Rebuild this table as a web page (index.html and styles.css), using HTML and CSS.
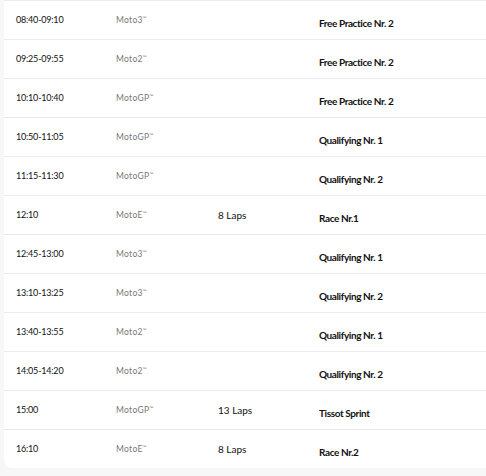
FILE: index.html
```html
<!DOCTYPE html>
<html>
<head>
<meta charset="utf-8">
<link rel="stylesheet" href="styles.css">
</head>
<body>
<div class="card">
  <div class="row"><span class="time">08:40-09:10</span><span class="cls">Moto3<sup>™</sup></span><span class="laps"></span><span class="session">Free Practice Nr. 2</span></div>
  <div class="row"><span class="time">09:25-09:55</span><span class="cls">Moto2<sup>™</sup></span><span class="laps"></span><span class="session">Free Practice Nr. 2</span></div>
  <div class="row"><span class="time">10:10-10:40</span><span class="cls">MotoGP<sup>™</sup></span><span class="laps"></span><span class="session">Free Practice Nr. 2</span></div>
  <div class="row"><span class="time">10:50-11:05</span><span class="cls">MotoGP<sup>™</sup></span><span class="laps"></span><span class="session">Qualifying Nr. 1</span></div>
  <div class="row"><span class="time">11:15-11:30</span><span class="cls">MotoGP<sup>™</sup></span><span class="laps"></span><span class="session">Qualifying Nr. 2</span></div>
  <div class="row"><span class="time">12:10</span><span class="cls">MotoE<sup>™</sup></span><span class="laps">8 Laps</span><span class="session">Race Nr.1</span></div>
  <div class="row"><span class="time">12:45-13:00</span><span class="cls">Moto3<sup>™</sup></span><span class="laps"></span><span class="session">Qualifying Nr. 1</span></div>
  <div class="row"><span class="time">13:10-13:25</span><span class="cls">Moto3<sup>™</sup></span><span class="laps"></span><span class="session">Qualifying Nr. 2</span></div>
  <div class="row"><span class="time">13:40-13:55</span><span class="cls">Moto2<sup>™</sup></span><span class="laps"></span><span class="session">Qualifying Nr. 1</span></div>
  <div class="row"><span class="time">14:05-14:20</span><span class="cls">Moto2<sup>™</sup></span><span class="laps"></span><span class="session">Qualifying Nr. 2</span></div>
  <div class="row"><span class="time">15:00</span><span class="cls">MotoGP<sup>™</sup></span><span class="laps">13 Laps</span><span class="session">Tissot Sprint</span></div>
  <div class="row"><span class="time">16:10</span><span class="cls">MotoE<sup>™</sup></span><span class="laps">8 Laps</span><span class="session">Race Nr.2</span></div>
</div>
</body>
</html>
```
FILE: styles.css
```css
html, body {
  margin: 0;
  padding: 0;
  background: #f7f7f7;
}
body {
  font-family: "Lato", "Noto Sans", sans-serif;
  color: #111;
  overflow: hidden;
}
.card {
  margin-left: 4px;
  margin-right: -20px;
  background: #fff;
  border-radius: 0 0 8px 8px;
}
.row {
  display: grid;
  grid-template-columns: 100px 102px 101px 1fr;
  padding-left: 12px;
  height: 38px;
  border-top: 1px solid #ebebeb;
  align-items: start;
}
.time {
  font-size: 9px;
  letter-spacing: -0.2px;
  padding-top: 13px;
  line-height: 12px;
}
.cls {
  font-size: 8.5px;
  letter-spacing: 0.3px;
  color: #777;
  padding-top: 13px;
  line-height: 12px;
}
.cls sup {
  font-size: 5px;
  letter-spacing: 0;
  vertical-align: top;
  line-height: 8px;
}
.laps {
  font-size: 10px;
  padding-top: 13px;
  line-height: 12px;
}
.session {
  font-size: 10px;
  font-weight: 700;
  letter-spacing: -0.4px;
  padding-top: 16px;
  line-height: 12px;
}
```
